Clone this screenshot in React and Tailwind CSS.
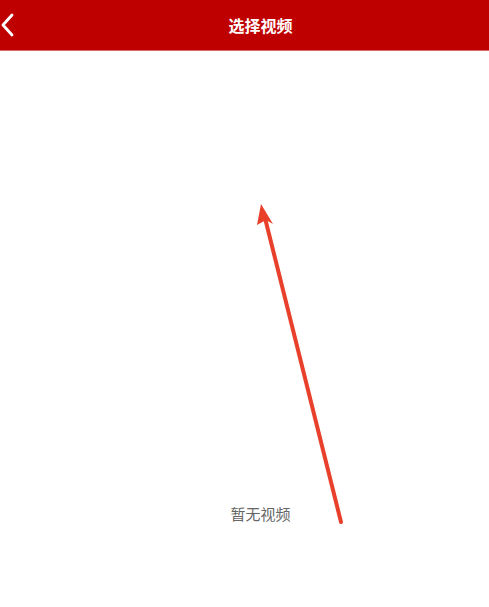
import React from "react";

export default function App() {
  return (
    <div
      className="relative w-[489px] h-[607px] bg-white overflow-hidden"
      style={{ fontFamily: '"Noto Sans CJK SC", "Noto Sans", sans-serif' }}
    >
      <div className="h-[51px] bg-[#bf0000] border-b border-[#d86a6a] flex items-center relative">
        <svg width="16" height="24" viewBox="0 0 16 24" className="absolute left-0 top-[13px]">
          <path d="M12 2 L3 12 L12 22" fill="none" stroke="white" strokeWidth="2.8" strokeLinecap="round" strokeLinejoin="round" />
        </svg>
        <div className="w-full pl-[32px] text-center text-white font-bold text-[16px] leading-none">选择视频</div>
      </div>
      <div className="w-full pl-[32px] text-center text-[15px] text-[#666666] mt-[455px] leading-none">暂无视频</div>
      <svg className="absolute left-0 top-0 pointer-events-none" width="489" height="607">
        <line x1="341" y1="522" x2="265" y2="218" stroke="#e8402a" strokeWidth="4" strokeLinecap="round" />
        <polygon points="261,204 273,224 266,220 257,225" fill="#e8402a" />
      </svg>
    </div>
  );
}
